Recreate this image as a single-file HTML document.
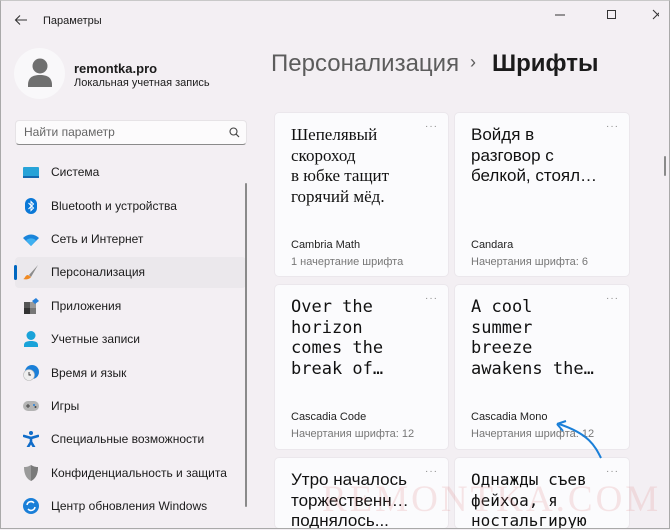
<!DOCTYPE html>
<html style="height:530px;overflow:hidden"><head><meta charset="utf-8"><style>
*{margin:0;padding:0;box-sizing:border-box}
body{width:670px;height:530px;overflow:hidden;background:#f3eff3;font-family:"Liberation Sans","DejaVu Sans",sans-serif;color:#1b1b1b;position:relative}
.win{position:absolute;left:0;top:0;width:670px;height:529px;border:1px solid #a9a9a9;border-top-color:#c8c8c8;z-index:5;pointer-events:none}
.abs{position:absolute}
.nav{position:absolute;left:51px;font-size:12px;color:#1b1b1b}
.ic{position:absolute;left:23px;width:16px;height:16px}
.card{position:absolute;background:#fbfbfd;border:1px solid #ebe7ec;border-radius:5px;overflow:hidden}
.card .t{position:absolute;left:16px;top:12px;font-size:17px;line-height:20.7px;color:#111}
.card .n{position:absolute;left:16px;font-size:11px;color:#222}
.card .s{position:absolute;left:16px;font-size:11px;color:#777}
.card .d{position:absolute;right:10px;top:8px;font-size:10px;color:#888;letter-spacing:1px}
.mono{font-family:"DejaVu Sans Mono","Liberation Mono",monospace}
</style></head><body>
<div class="win"></div>
<svg class="abs" style="left:14px;top:14px" width="14" height="12"><path d="M13 6H2M6 1.5L1.5 6 6 10.5" stroke="#333" stroke-width="1.1" fill="none"/></svg>
<div class="abs" style="left:43px;top:15px;font-size:11px">Параметры</div>
<svg class="abs" style="left:549px;top:9px" width="110" height="12"><path d="M6 6h10" stroke="#333"/><rect x="58.5" y="1.5" width="8" height="8" fill="none" stroke="#333"/><path d="M104 1l9 9M113 1l-9 9" stroke="#333"/></svg>
<div class="abs" style="left:14px;top:48px;width:51px;height:51px;border-radius:50%;background:#f9f8fa"></div>
<svg class="abs" style="left:27px;top:58px" width="26" height="32"><circle cx="13" cy="8" r="7.5" fill="#6f6f6f"/><path d="M1 27c0-7 4-10 12-10s12 3 12 10v2H1z" fill="#6f6f6f"/></svg>
<div class="abs" style="left:74px;top:61px;font-size:13px;font-weight:bold">remontka.pro</div>
<div class="abs" style="left:74px;top:77px;font-size:11px">Локальная учетная запись</div>
<div class="abs" style="left:15px;top:120px;width:232px;height:25px;background:#fcfbfc;border:1px solid #e6e3e6;border-bottom:1px solid #8a8a8a;border-radius:4px"></div>
<div class="abs" style="left:24px;top:125px;font-size:12px;color:#666">Найти параметр</div>
<svg class="abs" style="left:229px;top:127px" width="11" height="11"><circle cx="4.5" cy="4.5" r="3.5" fill="none" stroke="#444" stroke-width="1.1"/><path d="M7 7l3 3" stroke="#444" stroke-width="1.2"/></svg>
<div class="abs" style="left:15px;top:257px;width:231px;height:31px;background:#ebe8ec;border-radius:4px"></div>
<div class="abs" style="left:14px;top:265px;width:3px;height:15px;background:#0067c0;border-radius:2px"></div>
<div class="abs" style="left:245px;top:183px;width:2px;height:324px;background:#8a8a8a;border-radius:1px"></div>
<svg class="ic" style="top:165px"><rect x="0" y="2" width="16" height="11" rx="1" fill="#27a3d8"/><rect x="0" y="11" width="16" height="2" fill="#1469b0"/></svg>
<div class="nav" style="top:165px">Система</div>
<svg class="ic" style="top:198px"><rect x="2" y="0" width="12" height="16" rx="6" fill="#0a78d7"/><path d="M5.5 5l5 5-2.5 2.5V3.5L10.5 6l-5 5" stroke="#fff" fill="none" stroke-width="1"/></svg>
<div class="nav" style="top:199px">Bluetooth и устройства</div>
<svg class="ic" style="top:232px"><path d="M0 6a11 11 0 0116 0L8 14z" fill="#1a84da"/><path d="M3 8.5a7 7 0 0110 0L8 14z" fill="#3fb0f0"/></svg>
<div class="nav" style="top:232px">Сеть и Интернет</div>
<svg class="ic" style="top:264px"><path d="M15 1L6 11l2 2z" fill="#8b8b8b"/><path d="M5 11c-3 0-3 4-5 4 3 1 7 0 8-2z" fill="#f08a24"/></svg>
<div class="nav" style="top:265px">Персонализация</div>
<svg class="ic" style="top:298px"><rect x="1" y="4" width="6" height="6" fill="#555"/><rect x="1" y="10" width="6" height="6" fill="#333"/><rect x="7" y="10" width="6" height="6" fill="#777"/><rect x="7" y="4" width="6" height="6" fill="#999"/><path d="M9 3l4-3 3 3-4 3z" fill="#2680d9"/></svg>
<div class="nav" style="top:299px">Приложения</div>
<svg class="ic" style="top:331px"><circle cx="8" cy="4.5" r="4.5" fill="#1aa3d9"/><path d="M1 16v-2c0-3 3-4 7-4s7 1 7 4v2z" fill="#1aa3d9"/></svg>
<div class="nav" style="top:332px">Учетные записи</div>
<svg class="ic" style="top:365px"><circle cx="9" cy="7" r="7" fill="#1a7fd8"/><circle cx="6" cy="10" r="5.5" fill="#eee" stroke="#bbb" stroke-width=".6"/><path d="M6 7v3h2" stroke="#333" fill="none" stroke-width=".9"/></svg>
<div class="nav" style="top:366px">Время и язык</div>
<svg class="ic" style="top:398px"><rect x="0" y="3" width="16" height="10" rx="5" fill="#b4b4b4"/><path d="M3 8h4M5 6v4" stroke="#444" stroke-width="1"/><circle cx="11" cy="7" r="1" fill="#2680d9"/><circle cx="12.5" cy="9" r="1" fill="#444"/></svg>
<div class="nav" style="top:399px">Игры</div>
<svg class="ic" style="top:431px"><circle cx="8" cy="2" r="2" fill="#0f6cc9"/><path d="M1 5l7 2 7-2M8 7v4l-3 5M8 11l3 5" stroke="#0f6cc9" stroke-width="2.6" fill="none" stroke-linecap="round"/></svg>
<div class="nav" style="top:432px">Специальные возможности</div>
<svg class="ic" style="top:465px"><path d="M8 0c3 2 5 2 7 2 0 8-3 12-7 14C4 14 1 10 1 2c2 0 4 0 7-2z" fill="#9a9a9a"/><path d="M8 0c3 2 5 2 7 2 0 8-3 12-7 14z" fill="#7a7a7a"/></svg>
<div class="nav" style="top:466px">Конфиденциальность и защита</div>
<svg class="ic" style="top:498px"><circle cx="8" cy="8" r="8" fill="#1a7fd8"/><path d="M4 7a4 4 0 017-2M12 9a4 4 0 01-7 2" stroke="#fff" stroke-width="1.5" fill="none"/></svg>
<div class="nav" style="top:499px">Центр обновления Windows</div>

<div class="abs" style="left:271px;top:50px;font-size:24px;color:#5c5c5c">Персонализация</div>
<div class="abs" style="left:470px;top:52px;font-size:18px;color:#5c5c5c">›</div>
<div class="abs" style="left:492px;top:50px;font-size:24px;font-weight:bold;color:#1b1b1b">Шрифты</div>
<div class="abs" style="left:664px;top:156px;width:2px;height:20px;background:#8a8a8a;border-radius:1px"></div>

<div class="card" style="left:274px;top:112px;width:175px;height:165px">
<div class="d">···</div>
<div class="t" style="font-family:'Liberation Serif','DejaVu Serif',serif">Шепелявый<br>скороход<br>в юбке тащит<br>горячий мёд.</div>
<div class="n" style="top:126px">Cambria Math</div><div class="s" style="top:143px">1 начертание шрифта</div></div>
<div class="card" style="left:454px;top:112px;width:176px;height:165px">
<div class="d">···</div>
<div class="t">Войдя в<br>разговор с<br>белкой, стоял…</div>
<div class="n" style="top:126px">Candara</div><div class="s" style="top:143px">Начертания шрифта: 6</div></div>
<div class="card" style="left:274px;top:284px;width:175px;height:166px">
<div class="d">···</div>
<div class="t mono" style="font-size:17px">Over the<br>horizon<br>comes the<br>break of…</div>
<div class="n" style="top:126px">Cascadia Code</div><div class="s" style="top:143px">Начертания шрифта: 12</div></div>
<div class="card" style="left:454px;top:284px;width:176px;height:166px">
<div class="d">···</div>
<div class="t mono" style="font-size:17px">A cool<br>summer<br>breeze<br>awakens the…</div>
<div class="n" style="top:126px">Cascadia Mono</div><div class="s" style="top:143px">Начертания шрифта: 12</div></div>
<div class="card" style="left:274px;top:457px;width:175px;height:72px">
<div class="d">···</div>
<div class="t">Утро началось<br>торжественн…<br>поднялось...</div></div>
<div class="card" style="left:454px;top:457px;width:176px;height:72px">
<div class="d">···</div>
<div class="t mono" style="font-size:16px">Однажды съев<br>фейхоа, я<br>ностальгирую</div></div>
<svg class="abs" style="left:555px;top:418px" width="50" height="42"><path d="M46 40C40 28 34 16 4 6" stroke="#1a7fd8" stroke-width="2" fill="none"/><path d="M2 6l9-3M2 6l6 7" stroke="#1a7fd8" stroke-width="2" fill="none"/></svg>
<div class="abs" style="left:322px;top:478px;font-family:'Liberation Serif',serif;font-size:37px;letter-spacing:3px;color:rgba(220,120,120,.18);white-space:nowrap">REMONTKA.COM</div>
</body></html>
